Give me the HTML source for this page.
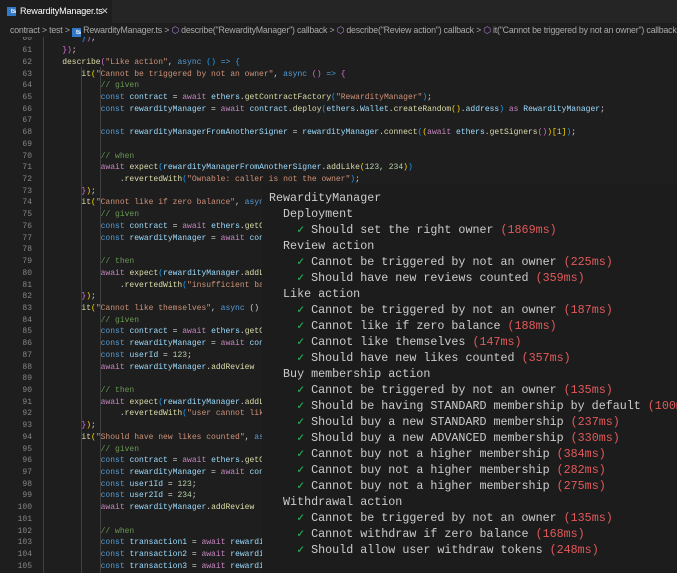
<!DOCTYPE html>
<html><head><meta charset="utf-8">
<style>
*{margin:0;padding:0;box-sizing:border-box}
html,body{width:677px;height:573px;overflow:hidden}
body{background:#1e1e1e;position:relative;font-family:"Liberation Sans",sans-serif}
#tabs{position:absolute;left:0;top:0;width:677px;height:23px;background:#252526}
#tab{position:absolute;left:0;top:0;width:112px;height:23px;background:#1e1e1e;color:#fff;font-size:9px;line-height:23px;padding-left:20px;letter-spacing:-0.1px;white-space:nowrap}
.ts{position:absolute;width:9px;height:9px;background:#3178c6;color:#fff;font-size:6px;line-height:10px;text-align:right;font-weight:bold}
#tab .x{position:absolute;left:101px;top:0;color:#ccc;font-size:9px}
#bc{position:absolute;left:0;top:23px;height:14px;width:677px;overflow:hidden;color:#a9a9a9;font-size:8.8px;line-height:14px;white-space:nowrap;padding-left:10px;letter-spacing:-0.2px}
.cb{color:#b180d7}
#code{position:absolute;left:0;top:37px;width:677px;height:536px;overflow:hidden}
#inner{position:absolute;left:0;top:-3.6px}
.l{height:11.73px;line-height:11.73px;font-family:"Liberation Mono",monospace;font-size:8px;white-space:pre;color:#d4d4d4;position:relative}
.ln{display:inline-block;width:32px;text-align:right;color:#858585;margin-right:11px}
.k{color:#569cd6}.v{color:#9cdcfe}.a{color:#c586c0}.f{color:#dcdcaa}.s{color:#ce9178}.c{color:#6a9955}.n{color:#b5cea8}
.p1{color:#ffd700}.p2{color:#da70d6}.p3{color:#179fff}
.g{position:absolute;top:0;width:1px;background:#404040;height:536px}
#term{position:absolute;left:262px;top:184px;width:415px;height:389px;overflow:hidden;background:#1c1c1c;font-family:"Liberation Mono",monospace;font-size:11.7px;color:#cccccc;padding-top:6px}
#term div{height:16px;line-height:16px;white-space:pre}
.ck{color:#23c55e}.ms{color:#e05a5a}
</style></head><body>
<div id="tabs"><div id="tab"><span class="ts" style="left:7px;top:7px">ts</span>RewardityManager.ts<span class="x">✕</span></div></div>
<div id="bc">contract &gt; test &gt; <span class="ts" style="position:relative;display:inline-block;top:1px">ts</span> RewardityManager.ts &gt; <span class="cb">⬡</span> describe("RewardityManager") callback &gt; <span class="cb">⬡</span> describe("Review action") callback &gt; <span class="cb">⬡</span> it("Cannot be triggered by not an owner") callback</div>
<div id="code">
<div class="g" style="left:43px"></div><div class="g" style="left:81px;top:30px"></div><div class="g" style="left:100px;top:30px"></div>
<div id="inner">
<div class="l"><span class="ln">60</span>        <span class="p3">}</span><span class="p2">)</span>;</div>
<div class="l"><span class="ln">61</span>    <span class="p2">}</span><span class="p2">)</span>;</div>
<div class="l"><span class="ln">62</span>    <span class="f">describe</span><span class="p2">(</span><span class="s">"Like action"</span>, <span class="k">async</span> <span class="p3">()</span> <span class="k">=&gt;</span> <span class="p3">{</span></div>
<div class="l"><span class="ln">63</span>        <span class="f">it</span><span class="p1">(</span><span class="s">"Cannot be triggered by not an owner"</span>, <span class="k">async</span> <span class="p2">()</span> <span class="k">=&gt;</span> <span class="p2">{</span></div>
<div class="l"><span class="ln">64</span>            <span class="c">// given</span></div>
<div class="l"><span class="ln">65</span>            <span class="k">const</span> <span class="v">contract</span> = <span class="a">await</span> <span class="v">ethers</span>.<span class="f">getContractFactory</span><span class="p3">(</span><span class="s">"RewardityManager"</span><span class="p3">)</span>;</div>
<div class="l"><span class="ln">66</span>            <span class="k">const</span> <span class="v">rewardityManager</span> = <span class="a">await</span> <span class="v">contract</span>.<span class="f">deploy</span><span class="p3">(</span><span class="v">ethers</span>.<span class="v">Wallet</span>.<span class="f">createRandom</span><span class="p1">()</span>.<span class="v">address</span><span class="p3">)</span> <span class="a">as</span> <span class="v">RewardityManager</span>;</div>
<div class="l"><span class="ln">67</span></div>
<div class="l"><span class="ln">68</span>            <span class="k">const</span> <span class="v">rewardityManagerFromAnotherSigner</span> = <span class="v">rewardityManager</span>.<span class="f">connect</span><span class="p3">(</span><span class="p1">(</span><span class="a">await</span> <span class="v">ethers</span>.<span class="f">getSigners</span><span class="p2">()</span><span class="p1">)</span><span class="p1">[</span><span class="n">1</span><span class="p1">]</span><span class="p3">)</span>;</div>
<div class="l"><span class="ln">69</span></div>
<div class="l"><span class="ln">70</span>            <span class="c">// when</span></div>
<div class="l"><span class="ln">71</span>            <span class="a">await</span> <span class="f">expect</span><span class="p3">(</span><span class="v">rewardityManagerFromAnotherSigner</span>.<span class="f">addLike</span><span class="p1">(</span><span class="n">123</span>, <span class="n">234</span><span class="p1">)</span><span class="p3">)</span></div>
<div class="l"><span class="ln">72</span>                .<span class="f">revertedWith</span><span class="p3">(</span><span class="s">"Ownable: caller is not the owner"</span><span class="p3">)</span>;</div>
<div class="l"><span class="ln">73</span>        <span class="p2">}</span><span class="p1">)</span>;</div>
<div class="l"><span class="ln">74</span>        <span class="f">it</span><span class="p1">(</span><span class="s">"Cannot like if zero balance"</span>, <span class="k">async</span> () =&gt; {</div>
<div class="l"><span class="ln">75</span>            <span class="c">// given</span></div>
<div class="l"><span class="ln">76</span>            <span class="k">const</span> <span class="v">contract</span> = <span class="a">await</span> <span class="v">ethers</span>.<span class="f">getContractFactory</span></div>
<div class="l"><span class="ln">77</span>            <span class="k">const</span> <span class="v">rewardityManager</span> = <span class="a">await</span> <span class="v">contract</span></div>
<div class="l"><span class="ln">78</span></div>
<div class="l"><span class="ln">79</span>            <span class="c">// then</span></div>
<div class="l"><span class="ln">80</span>            <span class="a">await</span> <span class="f">expect</span><span class="p3">(</span><span class="v">rewardityManager</span>.<span class="f">addLike</span></div>
<div class="l"><span class="ln">81</span>                .<span class="f">revertedWith</span><span class="p3">(</span><span class="s">"insufficient balance"</span></div>
<div class="l"><span class="ln">82</span>        <span class="p2">}</span><span class="p1">)</span>;</div>
<div class="l"><span class="ln">83</span>        <span class="f">it</span><span class="p1">(</span><span class="s">"Cannot like themselves"</span>, <span class="k">async</span> () =&gt; {</div>
<div class="l"><span class="ln">84</span>            <span class="c">// given</span></div>
<div class="l"><span class="ln">85</span>            <span class="k">const</span> <span class="v">contract</span> = <span class="a">await</span> <span class="v">ethers</span>.<span class="f">getContractFactory</span></div>
<div class="l"><span class="ln">86</span>            <span class="k">const</span> <span class="v">rewardityManager</span> = <span class="a">await</span> <span class="v">contract</span></div>
<div class="l"><span class="ln">87</span>            <span class="k">const</span> <span class="v">userId</span> = <span class="n">123</span>;</div>
<div class="l"><span class="ln">88</span>            <span class="a">await</span> <span class="v">rewardityManager</span>.<span class="f">addReview</span></div>
<div class="l"><span class="ln">89</span></div>
<div class="l"><span class="ln">90</span>            <span class="c">// then</span></div>
<div class="l"><span class="ln">91</span>            <span class="a">await</span> <span class="f">expect</span><span class="p3">(</span><span class="v">rewardityManager</span>.<span class="f">addLike</span></div>
<div class="l"><span class="ln">92</span>                .<span class="f">revertedWith</span><span class="p3">(</span><span class="s">"user cannot like</span></div>
<div class="l"><span class="ln">93</span>        <span class="p2">}</span><span class="p1">)</span>;</div>
<div class="l"><span class="ln">94</span>        <span class="f">it</span><span class="p1">(</span><span class="s">"Should have new likes counted"</span>, <span class="k">async</span> () =&gt; {</div>
<div class="l"><span class="ln">95</span>            <span class="c">// given</span></div>
<div class="l"><span class="ln">96</span>            <span class="k">const</span> <span class="v">contract</span> = <span class="a">await</span> <span class="v">ethers</span>.<span class="f">getContractFactory</span></div>
<div class="l"><span class="ln">97</span>            <span class="k">const</span> <span class="v">rewardityManager</span> = <span class="a">await</span> <span class="v">contract</span></div>
<div class="l"><span class="ln">98</span>            <span class="k">const</span> <span class="v">user1Id</span> = <span class="n">123</span>;</div>
<div class="l"><span class="ln">99</span>            <span class="k">const</span> <span class="v">user2Id</span> = <span class="n">234</span>;</div>
<div class="l"><span class="ln">100</span>            <span class="a">await</span> <span class="v">rewardityManager</span>.<span class="f">addReview</span></div>
<div class="l"><span class="ln">101</span></div>
<div class="l"><span class="ln">102</span>            <span class="c">// when</span></div>
<div class="l"><span class="ln">103</span>            <span class="k">const</span> <span class="v">transaction1</span> = <span class="a">await</span> <span class="v">rewardityManager</span></div>
<div class="l"><span class="ln">104</span>            <span class="k">const</span> <span class="v">transaction2</span> = <span class="a">await</span> <span class="v">rewardityManager</span></div>
<div class="l"><span class="ln">105</span>            <span class="k">const</span> <span class="v">transaction3</span> = <span class="a">await</span> <span class="v">rewardityManager</span></div>
</div></div>
<div id="term">
<div> RewardityManager</div>
<div>   Deployment</div>
<div>     <span class="ck">✓</span> Should set the right owner <span class="ms">(1869ms)</span></div>
<div>   Review action</div>
<div>     <span class="ck">✓</span> Cannot be triggered by not an owner <span class="ms">(225ms)</span></div>
<div>     <span class="ck">✓</span> Should have new reviews counted <span class="ms">(359ms)</span></div>
<div>   Like action</div>
<div>     <span class="ck">✓</span> Cannot be triggered by not an owner <span class="ms">(187ms)</span></div>
<div>     <span class="ck">✓</span> Cannot like if zero balance <span class="ms">(188ms)</span></div>
<div>     <span class="ck">✓</span> Cannot like themselves <span class="ms">(147ms)</span></div>
<div>     <span class="ck">✓</span> Should have new likes counted <span class="ms">(357ms)</span></div>
<div>   Buy membership action</div>
<div>     <span class="ck">✓</span> Cannot be triggered by not an owner <span class="ms">(135ms)</span></div>
<div>     <span class="ck">✓</span> Should be having STANDARD membership by default <span class="ms">(100ms)</span></div>
<div>     <span class="ck">✓</span> Should buy a new STANDARD membership <span class="ms">(237ms)</span></div>
<div>     <span class="ck">✓</span> Should buy a new ADVANCED membership <span class="ms">(330ms)</span></div>
<div>     <span class="ck">✓</span> Cannot buy not a higher membership <span class="ms">(384ms)</span></div>
<div>     <span class="ck">✓</span> Cannot buy not a higher membership <span class="ms">(282ms)</span></div>
<div>     <span class="ck">✓</span> Cannot buy not a higher membership <span class="ms">(275ms)</span></div>
<div>   Withdrawal action</div>
<div>     <span class="ck">✓</span> Cannot be triggered by not an owner <span class="ms">(135ms)</span></div>
<div>     <span class="ck">✓</span> Cannot withdraw if zero balance <span class="ms">(168ms)</span></div>
<div>     <span class="ck">✓</span> Should allow user withdraw tokens <span class="ms">(248ms)</span></div>
</div>
</body></html>
